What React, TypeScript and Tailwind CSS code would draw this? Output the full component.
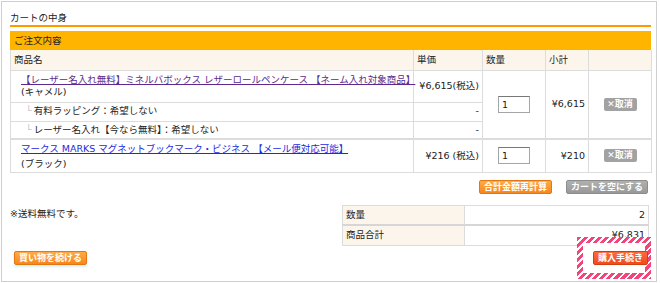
const cell = "border border-[#dcdcdc] px-[3px]";

function SmallButton({ label, tone }: { label: string; tone: "orange" | "gray" | "red" }) {
  const tones = {
    orange: "bg-gradient-to-b from-[#ffab45] to-[#f7861b] border-[#e2780f]",
    gray: "bg-gradient-to-b from-[#b0b0b0] to-[#999] border-[#8c8c8c]",
    red: "bg-gradient-to-b from-[#ff6a3a] to-[#ef4b1c] border-[#d33d12]",
  };
  return (
    <button
      type="button"
      className={`h-[14px] px-[4px] rounded-[2px] border text-white font-bold text-[9px] leading-[12px] whitespace-nowrap [font-family:'Noto_Sans_CJK_JP',sans-serif] ${tones[tone]}`}
    >
      {label}
    </button>
  );
}

function QtyInput() {
  return (
    <div className="mx-auto w-[32px] h-[17px] border border-[#a5a5a5] border-t-[#777] bg-white text-left pl-[3px] leading-[15px]">
      1
    </div>
  );
}

function CancelButton() {
  return (
    <div className="mx-auto w-[33px] h-[13px] rounded-[2px] bg-[#a2a2a2] text-white font-bold text-[9px] leading-[13px] text-center">
      ✕取消
    </div>
  );
}

export default function App() {
  return (
    <div className="relative w-[660px] h-[283px] bg-white text-[9.5px] text-[#222] [font-family:'DejaVu_Sans','Noto_Sans_CJK_JP',sans-serif]">
      <div className="ml-[1px] mt-[1px] w-[656px] h-[281px] border border-[#cfcfcf] pl-[8px] pr-[5px] flex flex-col">
        <div className="pt-[8px] leading-[15px] border-b-2 border-[#ff9900]">カートの中身</div>

        <div className="mt-[4px] h-[19px] bg-[#ffb400] px-[4px] leading-[19px]">ご注文内容</div>

        <table className="w-[641px] table-fixed border-collapse">
          <colgroup>
            <col className="w-[403px]" />
            <col className="w-[69px]" />
            <col className="w-[63px]" />
            <col className="w-[43px]" />
            <col className="w-[63px]" />
          </colgroup>
          <thead>
            <tr className="h-[20px] bg-[#fcf5ec]">
              <th className={`${cell} border-t-0 text-left font-normal`}>商品名</th>
              <th className={`${cell} border-t-0 text-left font-normal`}>単価</th>
              <th className={`${cell} border-t-0 text-left font-normal`}>数量</th>
              <th className={`${cell} border-t-0 text-left font-normal`}>小計</th>
              <th className={`${cell} border-t-0`}></th>
            </tr>
          </thead>
          <tbody>
            <tr className="h-[32px]">
              <td className={`${cell} pl-[10px] leading-[12px] whitespace-nowrap`}>
                <a className="underline text-[#5b2a8c]">
                  【レーザー名入れ無料】ミネルバボックス レザーロールペンケース 【ネーム入れ対象商品】
                </a>
                <div>(キャメル)</div>
              </td>
              <td className={`${cell} text-right align-middle whitespace-nowrap`}>¥6,615(税込)</td>
              <td className={`${cell} align-middle`} rowSpan={3}>
                <QtyInput />
              </td>
              <td className={`${cell} text-right align-middle whitespace-nowrap`} rowSpan={3}>
                ¥6,615
              </td>
              <td className={`${cell} align-middle`} rowSpan={3}>
                <CancelButton />
              </td>
            </tr>
            <tr className="h-[19px]">
              <td className={`${cell} pl-[15px]`}>
                <span className="text-[#c4c4c4] mr-[2px]">└</span>有料ラッピング：希望しない
              </td>
              <td className={`${cell} text-right`}>-</td>
            </tr>
            <tr className="h-[18px]">
              <td className={`${cell} pl-[15px]`}>
                <span className="text-[#c4c4c4] mr-[2px]">└</span>レーザー名入れ【今なら無料】：希望しない
              </td>
              <td className={`${cell} text-right`}>-</td>
            </tr>
            <tr className="h-[33px] border-t-2 border-[#dcdcdc]">
              <td className={`${cell} pl-[10px] leading-[15px] whitespace-nowrap`}>
                <a className="underline text-[#1a2be0]">
                  マークス MARKS マグネットブックマーク・ビジネス 【メール便対応可能】
                </a>
                <div>(ブラック)</div>
              </td>
              <td className={`${cell} text-right whitespace-nowrap`}>¥216 (税込)</td>
              <td className={cell}>
                <QtyInput />
              </td>
              <td className={`${cell} text-right whitespace-nowrap`}>¥210</td>
              <td className={cell}>
                <CancelButton />
              </td>
            </tr>
          </tbody>
        </table>

        <div className="mt-[7px] pr-[3px] flex justify-end gap-[14px]">
          <SmallButton label="合計金額再計算" tone="orange" />
          <SmallButton label="カートを空にする" tone="gray" />
        </div>

        <div className="mt-[11px] flex justify-between">
          <div className="pt-[2px] leading-[14px]">※送料無料です。</div>
          <table className="w-[306px] mr-[2px] table-fixed border-collapse">
            <colgroup>
              <col className="w-[122px]" />
              <col className="w-[184px]" />
            </colgroup>
            <tbody>
              <tr className="h-[20px]">
                <td className={`${cell} bg-[#fcf5ec]`}>数量</td>
                <td className={`${cell} text-right`}>2</td>
              </tr>
              <tr className="h-[20px] border-t-2 border-[#d6d6d6]">
                <td className={`${cell} bg-[#fcf5ec]`}>商品合計</td>
                <td className={`${cell} text-right`}>¥6,831</td>
              </tr>
            </tbody>
          </table>
        </div>

        <div className="mt-[5px] flex justify-between items-center">
          <div className="ml-[4px] shadow-[0_2px_2px_#d6eef5]">
            <SmallButton label="買い物を続ける" tone="orange" />
          </div>
          <div className="relative z-20 mr-[3px]">
            <SmallButton label="購入手続き" tone="red" />
          </div>
        </div>
      </div>

      <div className="absolute left-[577px] top-[236px] w-[74px] h-[42px] z-10 bg-[repeating-linear-gradient(135deg,#f2457c_0_3px,#ffffff_3px_5px)]">
        <div className="absolute inset-[6px] bg-white" />
      </div>
    </div>
  );
}
